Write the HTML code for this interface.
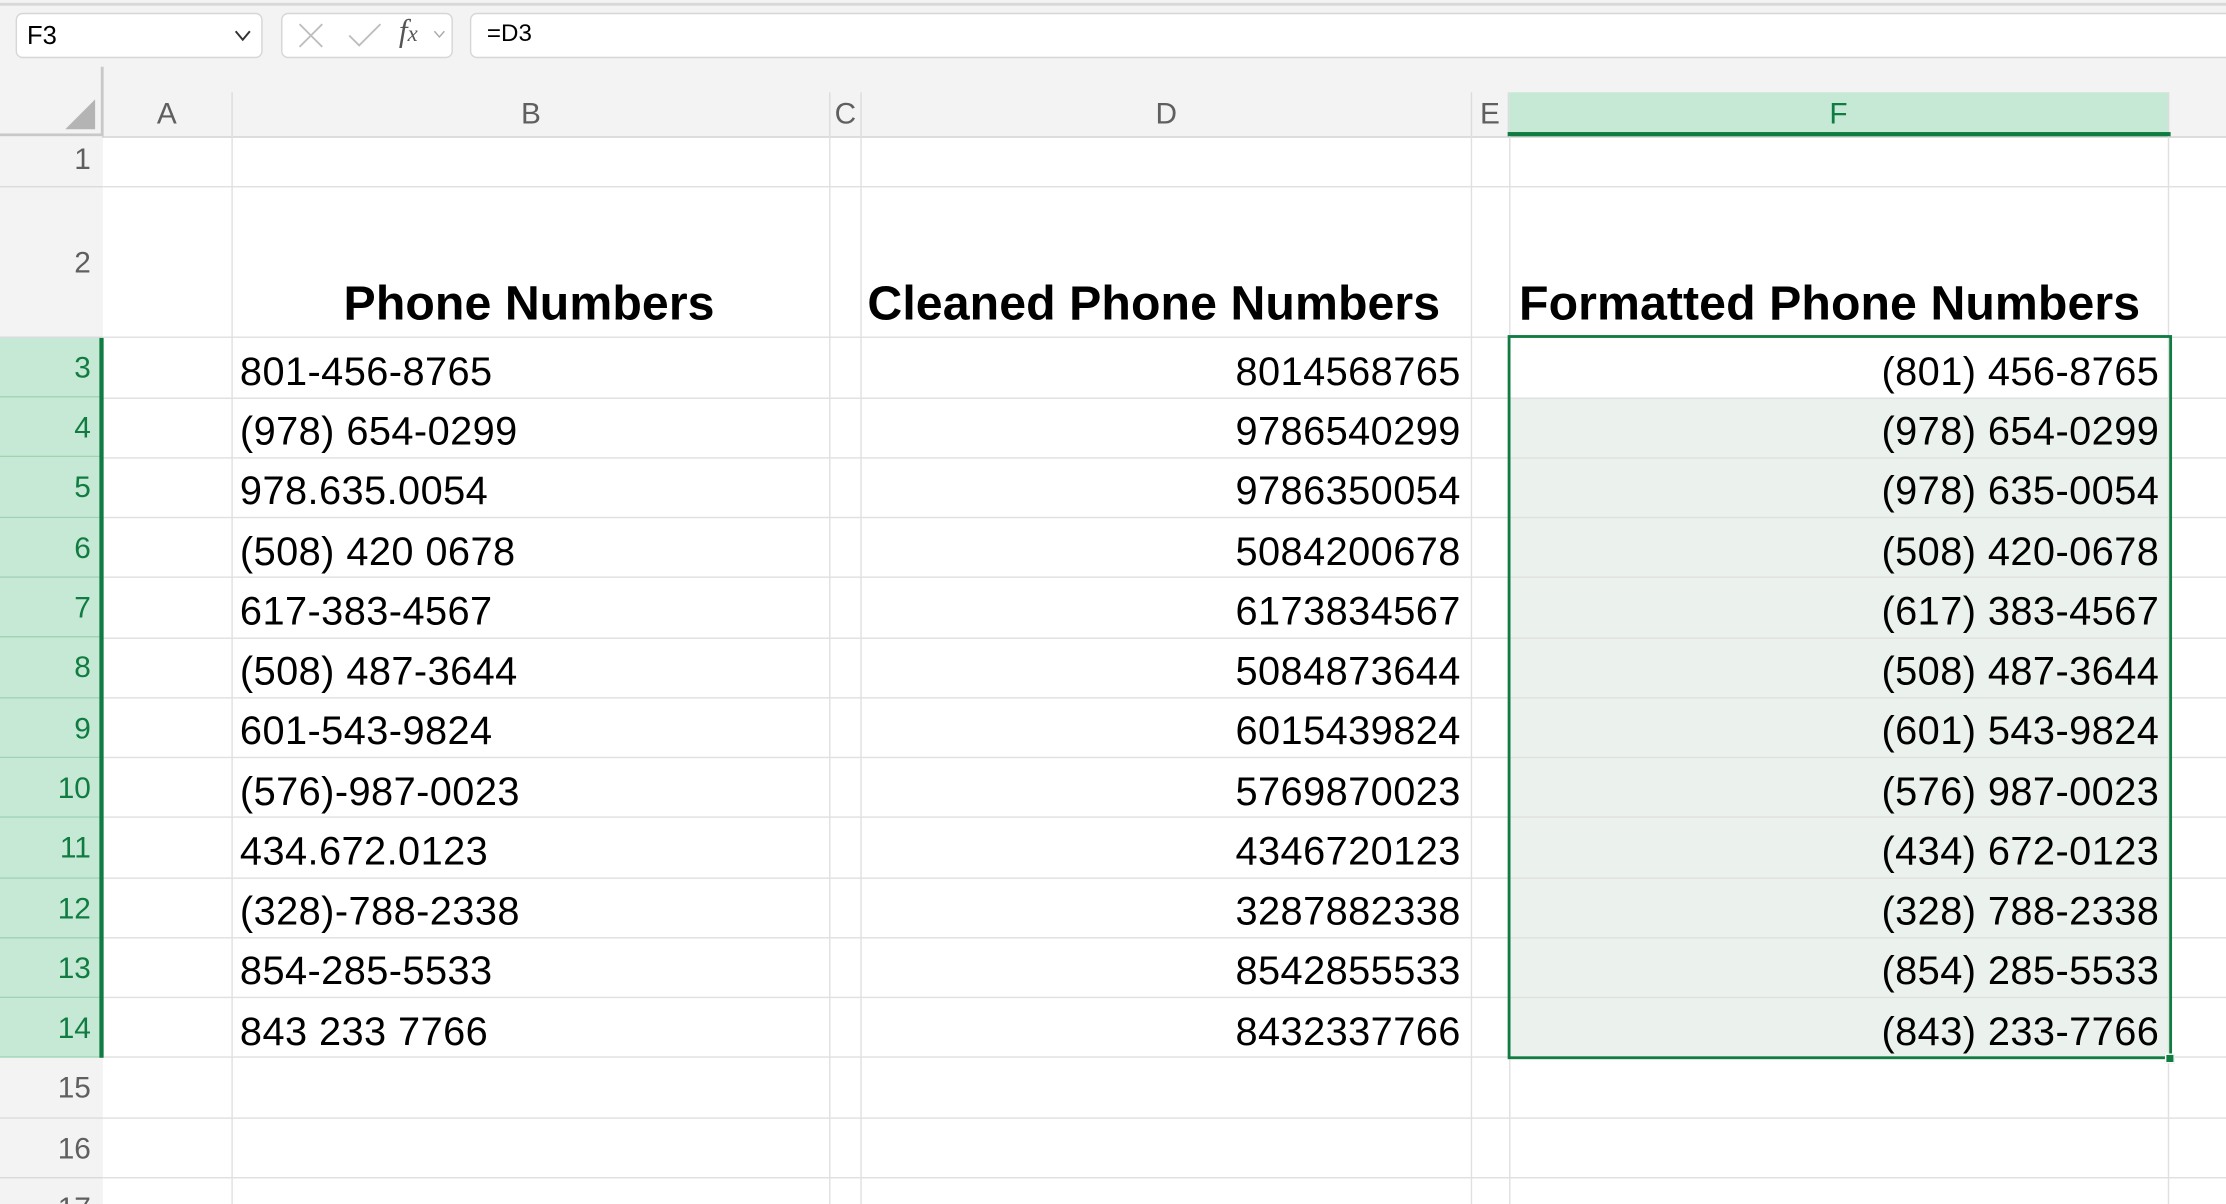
<!DOCTYPE html>
<html><head><meta charset="utf-8"><style>
*{margin:0;padding:0;box-sizing:border-box}
html,body{width:2226px;height:1204px;overflow:hidden;background:#fff}
#w{position:absolute;left:0;top:0;width:1568px;height:848px;overflow:hidden;transform:scale(1.41964,1.41981);transform-origin:0 0;font-family:"Liberation Sans",sans-serif;background:#fff}
.a{position:absolute}
.box{position:absolute;background:#fff;border:1px solid #d6d6d6;border-radius:5px}
.ch{position:absolute;top:65px;height:31px;line-height:31px;text-align:center;font-size:21px;color:#5f5f5f;border-right:1px solid #dcdcdc}
.rh{position:absolute;left:0;width:72px;text-align:right;padding-right:8px;font-size:21px;color:#5f5f5f;border-bottom:1px solid #dadada;background:#f3f3f3}
.rh.s{background:#c6e9d5;color:#107c41;border-bottom-color:#9fd3b5}
.hl{position:absolute;left:72px;width:1496px;height:1px;background:#e0e0e0}
.vl{position:absolute;top:96px;width:1px;height:752px;background:#e0e0e0}
.t{position:absolute;font-size:28px;color:#000;height:42px;line-height:45px;white-space:nowrap;letter-spacing:0.3px}
.b{left:169px}
.d{right:539px;text-align:right}
.f{right:47px;text-align:right}
.h{position:absolute;font-size:34px;font-weight:bold;top:192px;line-height:44px;letter-spacing:0.05px;white-space:nowrap}
</style></head><body><div id="w">
<div class="a" style="left:0;top:0;width:1568px;height:96px;background:#f3f3f3"></div>
<div class="a" style="left:0;top:2px;width:1568px;height:2px;background:#d8d8d8"></div>
<div class="box" style="left:11px;top:9px;width:174px;height:32px"></div>
<div class="a" style="left:19px;top:13px;font-size:18px;line-height:24px">F3</div>
<svg class="a" style="left:164px;top:20px" width="14" height="10"><path d="M2 2 L7 8 L12 2" stroke="#333" stroke-width="1.4" fill="none"/></svg>
<div class="box" style="left:198px;top:9px;width:121px;height:32px"></div>
<svg class="a" style="left:208px;top:14px" width="30" height="22"><path d="M3 3 L19 19 M19 3 L3 19" stroke="#bdbdbd" stroke-width="1.3" fill="none"/></svg>
<svg class="a" style="left:244px;top:14px" width="30" height="22"><path d="M2 11 L9 18 L24 3" stroke="#bdbdbd" stroke-width="1.3" fill="none"/></svg>
<div class="a" style="left:281px;top:9px;font-size:22px;font-style:italic;font-family:'Liberation Serif',serif;color:#555">f<span style="font-size:16px">x</span></div>
<svg class="a" style="left:305px;top:21px" width="10" height="8"><path d="M1 1 L4.5 5 L8 1" stroke="#aaa" stroke-width="1" fill="none"/></svg>
<div class="box" style="left:331px;top:9px;width:1250px;height:32px"></div>
<div class="a" style="left:343px;top:12px;font-size:17px;line-height:24px">=D3</div>
<div class="a" style="left:71px;top:47px;width:2px;height:50px;background:#c8c8c8"></div>
<div class="a" style="left:0;top:94px;width:72px;height:3px;background:#c8c8c8"></div>
<svg class="a" style="left:46px;top:70px" width="22" height="22"><path d="M21 0 L21 21 L0 21 Z" fill="#b4b4b4"/></svg>
<div class="a" style="left:72px;top:96px;width:1496px;height:1px;background:#d0d0d0"></div>
<div class="ch" style="left:72px;width:92px">A</div>
<div class="ch" style="left:164px;width:421px">B</div>
<div class="ch" style="left:585px;width:22px">C</div>
<div class="ch" style="left:607px;width:430px">D</div>
<div class="ch" style="left:1037px;width:26px">E</div>
<div class="ch" style="left:1063px;width:465px;background:#c6e9d5;color:#107c41">F</div>
<div class="a" style="left:1062px;top:93px;width:467px;height:3px;background:#107c41"></div>
<div class="a" style="left:1063px;top:280px;width:465px;height:465px;background:#ebf1ed"></div>
<div class="vl" style="left:163px"></div><div class="vl" style="left:584px"></div><div class="vl" style="left:606px"></div><div class="vl" style="left:1036px"></div><div class="vl" style="left:1063px"></div><div class="vl" style="left:1527px"></div>
<div class="hl" style="top:131px"></div><div class="hl" style="top:237px"></div><div class="hl" style="top:280px"></div><div class="hl" style="top:322px"></div><div class="hl" style="top:364px"></div><div class="hl" style="top:406px"></div><div class="hl" style="top:449px"></div><div class="hl" style="top:491px"></div><div class="hl" style="top:533px"></div><div class="hl" style="top:575px"></div><div class="hl" style="top:618px"></div><div class="hl" style="top:660px"></div><div class="hl" style="top:702px"></div><div class="hl" style="top:744px"></div><div class="hl" style="top:787px"></div><div class="hl" style="top:829px"></div>
<div class="a" style="left:0;top:96px;width:72px;height:752px;background:#f3f3f3;border-right:1px solid #c8c8c8"></div>
<div class="rh" style="top:96px;height:36px;line-height:34px">1</div>
<div class="rh" style="top:132px;height:106px;line-height:108px">2</div>
<div class="rh s" style="top:238px;height:42px;line-height:44px">3</div>
<div class="rh s" style="top:280px;height:42px;line-height:44px">4</div>
<div class="rh s" style="top:322px;height:43px;line-height:44px">5</div>
<div class="rh s" style="top:365px;height:42px;line-height:44px">6</div>
<div class="rh s" style="top:407px;height:42px;line-height:44px">7</div>
<div class="rh s" style="top:449px;height:43px;line-height:44px">8</div>
<div class="rh s" style="top:492px;height:42px;line-height:44px">9</div>
<div class="rh s" style="top:534px;height:42px;line-height:44px">10</div>
<div class="rh s" style="top:576px;height:43px;line-height:44px">11</div>
<div class="rh s" style="top:619px;height:42px;line-height:44px">12</div>
<div class="rh s" style="top:661px;height:42px;line-height:44px">13</div>
<div class="rh s" style="top:703px;height:42px;line-height:44px">14</div>
<div class="rh" style="top:745px;height:43px;line-height:44px">15</div>
<div class="rh" style="top:788px;height:42px;line-height:44px">16</div>
<div class="rh" style="top:830px;height:42px;line-height:44px">17</div>
<div class="a" style="left:70px;top:238px;width:3px;height:507px;background:#107c41"></div>
<div class="h" style="left:242px">Phone Numbers</div>
<div class="h" style="left:611px">Cleaned Phone Numbers</div>
<div class="h" style="left:1070px">Formatted Phone Numbers</div>
<div class="t b" style="top:239px">801-456-8765</div><div class="t d" style="top:239px">8014568765</div><div class="t f" style="top:239px">(801) 456-8765</div>
<div class="t b" style="top:281px">(978) 654-0299</div><div class="t d" style="top:281px">9786540299</div><div class="t f" style="top:281px">(978) 654-0299</div>
<div class="t b" style="top:323px">978.635.0054</div><div class="t d" style="top:323px">9786350054</div><div class="t f" style="top:323px">(978) 635-0054</div>
<div class="t b" style="top:366px">(508) 420 0678</div><div class="t d" style="top:366px">5084200678</div><div class="t f" style="top:366px">(508) 420-0678</div>
<div class="t b" style="top:408px">617-383-4567</div><div class="t d" style="top:408px">6173834567</div><div class="t f" style="top:408px">(617) 383-4567</div>
<div class="t b" style="top:450px">(508) 487-3644</div><div class="t d" style="top:450px">5084873644</div><div class="t f" style="top:450px">(508) 487-3644</div>
<div class="t b" style="top:492px">601-543-9824</div><div class="t d" style="top:492px">6015439824</div><div class="t f" style="top:492px">(601) 543-9824</div>
<div class="t b" style="top:535px">(576)-987-0023</div><div class="t d" style="top:535px">5769870023</div><div class="t f" style="top:535px">(576) 987-0023</div>
<div class="t b" style="top:577px">434.672.0123</div><div class="t d" style="top:577px">4346720123</div><div class="t f" style="top:577px">(434) 672-0123</div>
<div class="t b" style="top:619px">(328)-788-2338</div><div class="t d" style="top:619px">3287882338</div><div class="t f" style="top:619px">(328) 788-2338</div>
<div class="t b" style="top:661px">854-285-5533</div><div class="t d" style="top:661px">8542855533</div><div class="t f" style="top:661px">(854) 285-5533</div>
<div class="t b" style="top:704px">843 233 7766</div><div class="t d" style="top:704px">8432337766</div><div class="t f" style="top:704px">(843) 233-7766</div>
<div class="a" style="left:1062px;top:236px;width:468px;height:510px;border:2px solid #107c41"></div>
<div class="a" style="left:1525px;top:742px;width:7px;height:7px;background:#107c41;border:1px solid #fff"></div>
</div></body></html>
